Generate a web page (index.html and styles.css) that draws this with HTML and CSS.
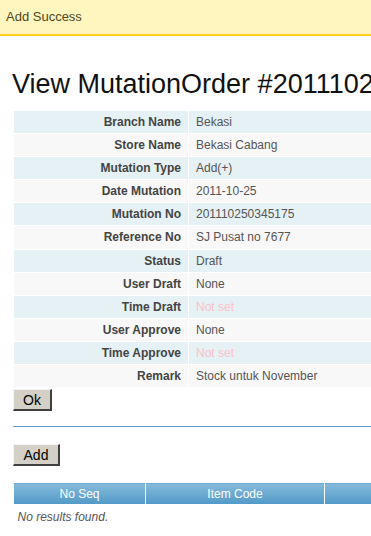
FILE: index.html
```html
<!DOCTYPE html>
<html>
<head>
<meta charset="utf-8">
<title>View MutationOrder</title>
<link rel="stylesheet" href="styles.css">
</head>
<body>
<div class="viewport">
  <div class="page">
    <div class="flash">Add Success</div>
    <div class="content">
      <h1 class="title">View MutationOrder #201110250345175</h1>
      <table class="detail">
        <tr class="odd"><th>Branch Name</th><td>Bekasi</td></tr>
        <tr class="even"><th>Store Name</th><td>Bekasi Cabang</td></tr>
        <tr class="odd"><th>Mutation Type</th><td>Add(+)</td></tr>
        <tr class="even"><th>Date Mutation</th><td>2011-10-25</td></tr>
        <tr class="odd"><th>Mutation No</th><td>201110250345175</td></tr>
        <tr class="even"><th>Reference No</th><td>SJ Pusat no 7677</td></tr>
        <tr class="odd"><th>Status</th><td>Draft</td></tr>
        <tr class="even"><th>User Draft</th><td>None</td></tr>
        <tr class="odd"><th>Time Draft</th><td><span class="null">Not set</span></td></tr>
        <tr class="even"><th>User Approve</th><td>None</td></tr>
        <tr class="odd"><th>Time Approve</th><td><span class="null">Not set</span></td></tr>
        <tr class="even"><th>Remark</th><td>Stock untuk November</td></tr>
      </table>
      <div class="btn-row"><button class="btn btn-ok" type="button">Ok</button></div>
      <hr class="divider">
      <div class="btn-row add-row"><button class="btn btn-add" type="button">Add</button></div>
      <table class="grid">
        <thead>
          <tr>
            <th class="c-seq">No Seq</th>
            <th class="c-code">Item Code</th>
            <th class="c-name">Item Name</th>
            <th class="c-qty">Quantity</th>
            <th class="c-act">&nbsp;</th>
          </tr>
        </thead>
        <tbody>
          <tr><td class="empty" colspan="5"><em>No results found.</em></td></tr>
        </tbody>
      </table>
    </div>
  </div>
</div>
</body>
</html>
```

FILE: styles.css
```css
html, body {
  margin: 0;
  padding: 0;
  background: #fff;
}
body {
  font-family: "Liberation Sans", Arial, sans-serif;
  font-size: 13px;
  color: #555;
}
.viewport {
  width: 100%;
  overflow: hidden;
}
.page {
  width: 950px;
}
.flash {
  height: 34px;
  line-height: 34px;
  padding: 0 6px;
  background: #fff6bf;
  border-bottom: 2px solid #ffd324;
  color: #514721;
  font-size: 13px;
}
.content {
  padding: 0 13px;
}
.title {
  margin: 32px 0 10px -1px;
  font-size: 27px;
  line-height: 32px;
  font-weight: normal;
  color: #111;
  white-space: nowrap;
}
.detail {
  width: 100%;
  border-collapse: collapse;
  font-size: 12px;
}
.detail th,
.detail td {
  border: 1px solid #fff;
  padding: 4px 7px;
  line-height: 14.1px;
  vertical-align: top;
}
.detail th {
  width: 160px;
  text-align: right;
  font-weight: bold;
  color: #444;
}
.detail td {
  text-align: left;
  color: #555;
}
.detail tr.odd { background: #e5f1f4; }
.detail tr.even { background: #f8f8f8; }
.null { color: pink; }
.btn-row {
  margin-top: 1px;
  display: flex;
}
.btn {
  font-family: "Liberation Sans", Arial, sans-serif;
  font-size: 14px;
  height: 22px;
  padding: 0 7px;
  background: #d4d0c8;
  color: #000;
  border-style: solid;
  border-width: 1px 2px 2px 1px;
  border-color: #f4f4f4 #404040 #404040 #f4f4f4;
  line-height: 18px;
}
.btn-ok { width: 39px; }
.btn-add { width: 47px; }
.divider {
  margin: 15px 0 0 0;
  border: 0;
  border-top: 1px solid #5d9cc7;
  height: 0;
}
.add-row {
  margin-top: 17px;
}
.grid {
  margin-top: 16px;
  border-collapse: collapse;
  width: 100%;
  font-size: 12px;
}
.grid th {
  border: 1px solid #fff;
  height: 21px;
  padding: 0 6px;
  color: #fff;
  font-weight: normal;
  text-align: center;
  background: linear-gradient(#86badb, #509ac7);
}
.grid th.c-seq { width: 119px; }
.grid th.c-code { width: 166px; }
.grid td.empty {
  padding: 5px 4px;
  color: #555;
  font-size: 12px;
}
```
